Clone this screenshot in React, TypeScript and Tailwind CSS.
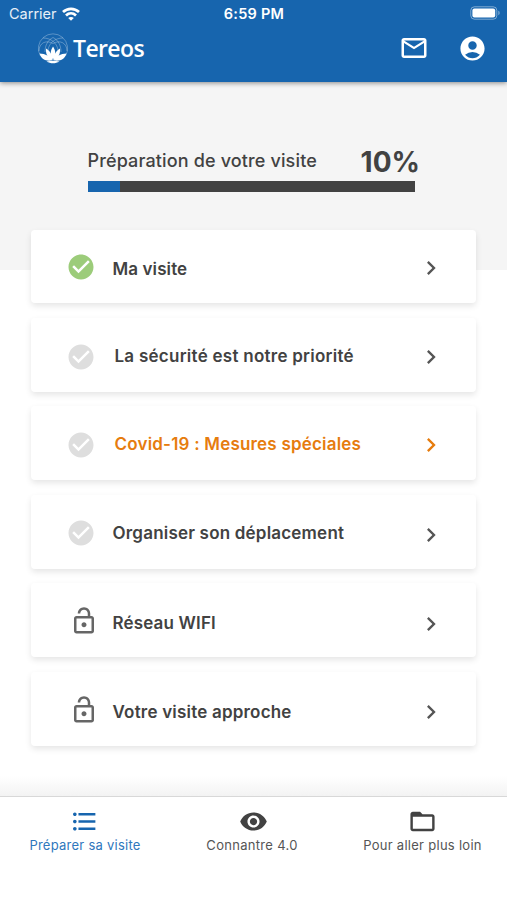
import clsx from 'clsx';
import type { IconType } from 'react-icons';
import {
  MdAccountCircle,
  MdCheckCircle,
  MdChevronRight,
  MdFolderOpen,
  MdFormatListBulleted,
  MdMailOutline,
  MdOutlineLockOpen,
  MdRemoveRedEye,
} from 'react-icons/md';

type Step = {
  label: string;
  status: 'done' | 'todo' | 'locked';
  highlight?: boolean;
  iconClass: string;
  labelClass: string;
  arrowClass: string;
};

const STEPS: Step[] = [
  { label: 'Ma visite', status: 'done', iconClass: 'pt-[22px]', labelClass: 'pt-[27px] pl-[16px] tracking-[0.1px]', arrowClass: 'pt-[24.500px]' },
  { label: 'La sécurité est notre priorité', status: 'todo', iconClass: 'pt-[24px]', labelClass: 'pt-[26.500px] pl-[18px] tracking-[0.26px]', arrowClass: 'pt-[25px]' },
  { label: 'Covid-19 : Mesures spéciales', status: 'todo', highlight: true, iconClass: 'pt-[24px]', labelClass: 'pt-[26px] pl-[18px] tracking-[0.2px]', arrowClass: 'pt-[24.500px]' },
  { label: 'Organiser son déplacement', status: 'todo', iconClass: 'pt-[23px]', labelClass: 'pt-[26.500px] pl-[16px] tracking-[0.2px]', arrowClass: 'pt-[26.500px]' },
  { label: 'Réseau WIFI', status: 'locked', iconClass: 'pt-[23px] pl-[3px]', labelClass: 'pt-[28px] pl-[16px] tracking-[0.16px]', arrowClass: 'pt-[27px]' },
  { label: 'Votre visite approche', status: 'locked', iconClass: 'pt-[23px] pl-[3px]', labelClass: 'pt-[28px] pl-[16px] tracking-[0.2px]', arrowClass: 'pt-[26.500px]' },
];

const TABS: { label: string; icon: IconType; active?: boolean; labelClass: string }[] = [
  { label: 'Préparer sa visite', icon: MdFormatListBulleted, active: true, labelClass: 'tracking-[0.25px] ml-px' },
  { label: 'Connantre 4.0', icon: MdRemoveRedEye, labelClass: 'tracking-[0.3px] -ml-[3px]' },
  { label: 'Pour aller plus loin', icon: MdFolderOpen, labelClass: 'tracking-[0.28px]' },
];

function WifiIcon() {
  return (
    <svg width="18" height="14" viewBox="0 0 18 14" fill="none" stroke="white" strokeWidth="2.7">
      <path d="M1 5C5.500.7 12.500.7 17 5" />
      <path d="M4 8.500c2.900-2.800 7.100-2.800 10 0" />
      <path d="M9 13.800 6.200 11c1.600-1.500 4-1.500 5.600 0Z" fill="white" stroke="none" />
    </svg>
  );
}

function BatteryIcon() {
  return (
    <svg width="31" height="14" viewBox="0 0 31 14" fill="none">
      <rect x="0.8" y="0.8" width="26" height="12.4" rx="3.6" stroke="white" strokeOpacity="0.45" />
      <rect x="2.4" y="2.4" width="22.8" height="9.2" rx="2" fill="white" />
      <path d="M28.400 4.800c1.600.6 1.600 3.800 0 4.400Z" fill="white" fillOpacity="0.5" />
    </svg>
  );
}

/** Lotus flower inside a thin globe of overlapping arcs. */
function TereosMark() {
  return (
    <svg width="32" height="32" viewBox="0 0 32 32" fill="none">
      <g stroke="white" strokeOpacity="0.36" strokeWidth="0.8">
        <path d="M3.500 24A14.600 14.600 0 1 1 28.500 24" />
        <path d="M8 20C8 13 11 8 16 5.500C21 8 24 13 24 20" />
        <path d="M2 19C2 11 9 7.500 16 11.500C23 7.500 30 11 30 19" />
        <path d="M6 6c8 0 14 5 15 12M26 6c-8 0-14 5-15 12" />
      </g>
      <g fill="white">
        <path d="M16 14.500c3 4.500 3 9 0 13-3-4-3-8.500 0-13Z" />
        <path d="M9 16.500c4 2.500 6.300 6 6.600 11.500C10.500 26 8.500 22 9 16.500Z" />
        <path d="M23 16.500c-4 2.500-6.300 6-6.600 11.500C21.500 26 23.500 22 23 16.500Z" />
        <path d="M2.500 21.500c6 .3 10.500 2.500 13 6.800C9 29.500 4.500 27.500 2.500 21.500Z" />
        <path d="M29.500 21.500c-6 .3-10.500 2.500-13 6.800 6.500 1.200 11-.8 13-6.800Z" />
        <path d="M9.500 29.400c4.500-.8 8.500-.8 13 0-4 2.400-9 2.400-13 0Z" />
      </g>
    </svg>
  );
}

function Header() {
  return (
    <header className="relative z-10 h-[82px] shrink-0 bg-[#1765ae] text-white shadow-[0_1px_5px_rgba(0,0,0,0.45)]">
      <div className="grid h-7 grid-cols-3 items-center pr-[7px] pl-[8px] text-[14.500px] leading-none">
        <div className="flex items-center gap-[5px]">
          <span className="ml-px text-white/90">Carrier</span>
          <WifiIcon />
        </div>
        <span className="text-center font-semibold tracking-[0.25px]">6:59 PM</span>
        <div className="-mt-0.5 -mr-px flex justify-end">
          <BatteryIcon />
        </div>
      </div>
      <div className="flex h-10 items-center pr-5 pl-[37px]">
        <TereosMark />
        <span className="ml-1 font-['Open_Sans'] text-[23px] leading-none font-semibold tracking-[-0.6px]">Tereos</span>
        <div className="ml-auto flex items-center gap-[29px]">
          <MdMailOutline size={30} />
          <MdAccountCircle size={29} />
        </div>
      </div>
    </header>
  );
}

function Progress({ value }: { value: number }) {
  return (
    <section className="h-[188px] shrink-0 bg-[#f5f5f5] pt-[65px] pr-[92px] pl-[87.500px]">
      <div className="flex h-[34px] justify-between">
        <h1 className="pt-[2px] text-[18px] leading-6 font-medium tracking-[0.14px]">Préparation de votre visite</h1>
        <span className="-mr-[5px] pt-[3px] text-[28px] leading-6 font-bold">{value}%</span>
      </div>
      <div className="h-[11px] bg-[#424242]">
        <div className="h-full bg-[#1765ae]" style={{ width: `${value}%` }} />
      </div>
    </section>
  );
}

function StepCard({ step }: { step: Step }) {
  const StatusIcon = step.status === 'locked' ? MdOutlineLockOpen : MdCheckCircle;

  return (
    <button
      type="button"
      className="flex h-[73.600px] items-start rounded bg-white pr-[31px] pl-[35px] text-left shadow-[0_3px_6px_rgba(0,0,0,0.1)]"
    >
      <span
        className={clsx(
          'w-[49px] shrink-0',
          step.iconClass,
          step.status === 'done' && 'text-[#9ccc7a]',
          step.status === 'todo' && 'text-[#dedede]',
          step.status === 'locked' && 'text-[#666666]',
        )}
      >
        <StatusIcon size={30} />
      </span>
      <span className={clsx('-ml-[18.500px] text-[17px] leading-6 font-semibold', step.labelClass, step.highlight && 'text-[#e67c0e]')}>
        {step.label}
      </span>
      <span className={clsx('ml-auto', step.arrowClass, step.highlight ? 'text-[#e67c0e]' : 'text-[#555555]')}>
        <MdChevronRight size={28} />
      </span>
    </button>
  );
}

function BottomNav() {
  return (
    <nav className="grid h-[104px] shrink-0 grid-cols-3 items-start border-t border-[#d8d8d8] bg-white">
      {TABS.map(({ label, icon: Icon, active, labelClass }) => (
        <button
          key={label}
          type="button"
          className={clsx('flex flex-col items-center pt-[10px]', active && 'text-[#1765ae]')}
        >
          <Icon size={29} />
          <span className={clsx('text-[13px] leading-[18px]', active ? 'text-[#2f77bd]' : 'text-[#555555]', labelClass)}>{label}</span>
        </button>
      ))}
    </nav>
  );
}

export default function App() {
  return (
    <div className="flex h-[900px] w-[507px] flex-col overflow-hidden bg-white font-['Inter',sans-serif] text-[#424242]">
      <Header />
      <Progress value={10} />
      <main className="-mt-[40.500px] flex flex-1 flex-col gap-[14.900px] px-[31px]">
        {STEPS.map((step) => (
          <StepCard key={step.label} step={step} />
        ))}
      </main>
      <div className="h-[20px] shrink-0 bg-linear-to-b from-white to-[#f3f3f3]" />
      <BottomNav />
    </div>
  );
}
